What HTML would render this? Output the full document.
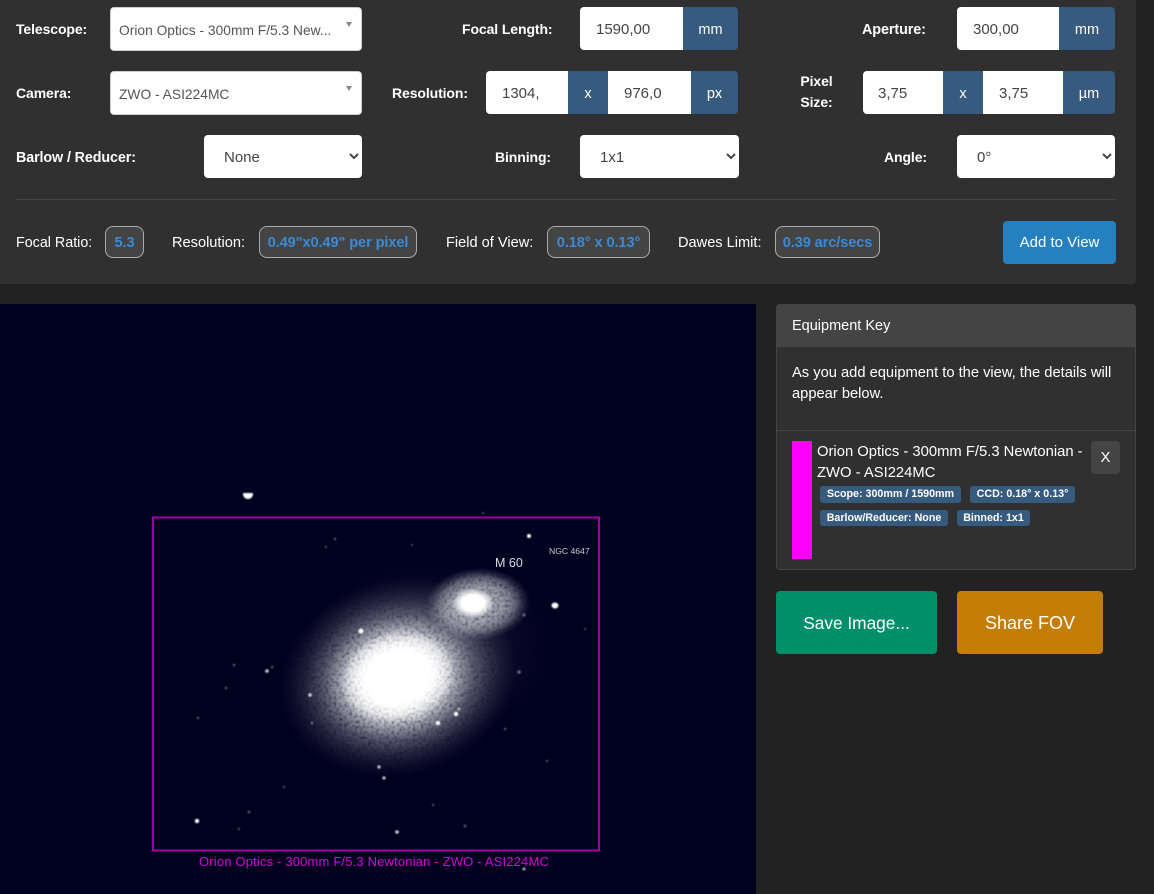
<!DOCTYPE html>
<html><head><meta charset="utf-8">
<style>
html,body{margin:0;padding:0;background:#222;width:1154px;height:894px;overflow:hidden}
body{position:relative;font-family:"Liberation Sans",sans-serif;color:#fff;font-size:14px}
.a{position:absolute;white-space:nowrap}
.lb{font-weight:bold;font-size:14px;letter-spacing:-.1px}
.t{font-size:14.6px}
.in{position:absolute;background:#fff;color:#444;font-size:15px;height:43px;line-height:45px;box-sizing:border-box;padding-left:16px;white-space:nowrap}
.ad{position:absolute;background:#375a7f;color:#fff;font-size:14.5px;height:43px;line-height:46px;text-align:center}
select{position:absolute;background:#fff;color:#444;border:0;border-radius:4px;font:15px "Liberation Sans",sans-serif;height:43px;padding:2px 0 0 16px;box-sizing:border-box}
.s2{position:absolute;background:#fff;border:1px solid #ccc;border-radius:4px;box-sizing:border-box;color:#555;font-size:13.8px;line-height:45px;padding-left:8px;left:110px;width:252px;height:44px;white-space:nowrap}
.s2:after{content:"";position:absolute;right:9px;top:14px;border:3.5px solid transparent;border-top:5px solid #888;border-bottom:0}
.bd{position:absolute;top:226px;height:32px;box-sizing:border-box;background:#444;border:1px solid #aaa;border-radius:8px;color:#3a8ad6;font-weight:bold;font-size:14.6px;line-height:33px;text-align:center;white-space:nowrap;letter-spacing:-.1px}
.tg{position:absolute;background:#375a7f;border-radius:3px;font-size:10.7px;font-weight:bold;line-height:17px;height:17px;text-align:center;white-space:nowrap}
.btn{position:absolute;border-radius:4px;text-align:center;white-space:nowrap}
</style></head><body>
<div class="a" style="left:0;top:0;width:1136px;height:284px;background:#303030;border-radius:0 0 4px 0"></div>

<div class="a lb" style="left:16px;top:21px">Telescope:</div>
<div class="s2" style="top:7px">Orion Optics - 300mm F/5.3 New...</div>
<div class="a lb" style="left:462px;top:21px">Focal Length:</div>
<div class="in" style="left:580px;top:7px;width:103px;border-radius:4px 0 0 4px">1590,00</div>
<div class="ad" style="left:683px;top:7px;width:55px;border-radius:0 4px 4px 0">mm</div>
<div class="a lb" style="left:862px;top:22px;font-size:14.4px">Aperture:</div>
<div class="in" style="left:957px;top:7px;width:102px;border-radius:4px 0 0 4px">300,00</div>
<div class="ad" style="left:1059px;top:7px;width:56px;border-radius:0 4px 4px 0">mm</div>

<div class="a lb" style="left:16px;top:85px">Camera:</div>
<div class="s2" style="top:71px">ZWO - ASI224MC</div>
<div class="a lb" style="left:392px;top:85px">Resolution:</div>
<div class="in" style="left:486px;top:71px;width:82px;border-radius:4px 0 0 4px">1304,</div>
<div class="ad" style="left:568px;top:71px;width:40px">x</div>
<div class="in" style="left:608px;top:71px;width:83px">976,0</div>
<div class="ad" style="left:691px;top:71px;width:47px;border-radius:0 4px 4px 0">px</div>
<div class="a lb" style="left:800px;top:71px;line-height:21px;text-align:center;width:33px">Pixel<br>Size:</div>
<div class="in" style="left:863px;top:71px;width:80px;border-radius:4px 0 0 4px;padding-left:15px">3,75</div>
<div class="ad" style="left:943px;top:71px;width:40px">x</div>
<div class="in" style="left:983px;top:71px;width:80px">3,75</div>
<div class="ad" style="left:1063px;top:71px;width:52px;border-radius:0 4px 4px 0">µm</div>

<div class="a lb" style="left:16px;top:150px;font-size:14.3px">Barlow / Reducer:</div>
<select style="left:204px;top:135px;width:158px"><option>None</option></select>
<div class="a lb" style="left:495px;top:149px">Binning:</div>
<select style="left:580px;top:135px;width:159px"><option>1x1</option></select>
<div class="a lb" style="left:884px;top:149px">Angle:</div>
<select style="left:957px;top:135px;width:158px"><option>0°</option></select>

<div class="a" style="left:16px;top:199px;width:1100px;height:1px;background:#444"></div>

<div class="a t" style="left:16px;top:235px;font-size:14.3px">Focal Ratio:</div>
<div class="bd" style="left:105px;width:39px">5.3</div>
<div class="a t" style="left:172px;top:235px">Resolution:</div>
<div class="bd" style="left:259px;width:158px">0.49"x0.49" per pixel</div>
<div class="a t" style="left:446px;top:235px">Field of View:</div>
<div class="bd" style="left:547px;width:103px">0.18° x 0.13°</div>
<div class="a t" style="left:678px;top:235px">Dawes Limit:</div>
<div class="bd" style="left:775px;width:105px">0.39 arc/secs</div>
<div class="btn" style="left:1003px;top:221px;width:113px;height:43px;background:#2580bf;line-height:44px;font-size:15px">Add to View</div>

<svg class="a" style="left:0;top:304px" width="756" height="590" viewBox="0 304 756 590">
<defs>
<radialGradient id="g1"><stop offset="0" stop-color="#fff"/><stop offset=".3" stop-color="#fff"/><stop offset=".42" stop-color="#fff" stop-opacity=".82"/><stop offset=".52" stop-color="#fff" stop-opacity=".58"/><stop offset=".64" stop-color="#fff" stop-opacity=".32"/><stop offset=".78" stop-color="#fff" stop-opacity=".14"/><stop offset=".9" stop-color="#fff" stop-opacity=".05"/><stop offset="1" stop-color="#fff" stop-opacity="0"/></radialGradient>
<radialGradient id="g2"><stop offset="0" stop-color="#fff" stop-opacity=".7"/><stop offset=".5" stop-color="#fff" stop-opacity=".6"/><stop offset=".72" stop-color="#fff" stop-opacity=".4"/><stop offset=".86" stop-color="#fff" stop-opacity=".16"/><stop offset="1" stop-color="#fff" stop-opacity="0"/></radialGradient>
<radialGradient id="g3"><stop offset="0" stop-color="#fff"/><stop offset=".55" stop-color="#fff"/><stop offset=".82" stop-color="#fff" stop-opacity=".45"/><stop offset="1" stop-color="#fff" stop-opacity="0"/></radialGradient>
<radialGradient id="g4"><stop offset="0" stop-color="#fff" stop-opacity=".1"/><stop offset="1" stop-color="#fff" stop-opacity="0"/></radialGradient>
<filter id="b1" x="-20%" y="-20%" width="140%" height="140%"><feGaussianBlur stdDeviation=".7"/></filter>
<filter id="n" x="-5%" y="-5%" width="110%" height="110%"><feTurbulence type="fractalNoise" baseFrequency=".38" numOctaves="1" seed="4" result="t"/><feColorMatrix in="t" type="matrix" values="0 0 0 0 1 0 0 0 0 1 0 0 0 0 1 .9 .9 0 0 0" result="m"/><feComposite in="SourceGraphic" in2="m" operator="in" result="c"/><feGaussianBlur in="c" stdDeviation=".6"/></filter>
</defs>
<rect x="0" y="304" width="756" height="590" fill="#00001f"/>
<ellipse cx="430" cy="650" rx="125" ry="90" fill="url(#g4)"/>
<g filter="url(#n)"><ellipse cx="398" cy="678" rx="120" ry="98" fill="url(#g1)" transform="rotate(-15 398 678)"/></g>
<ellipse cx="398" cy="677" rx="58" ry="46" fill="url(#g3)" transform="rotate(-15 398 677)"/>
<g filter="url(#n)"><ellipse cx="478" cy="604" rx="52" ry="36" fill="url(#g2)" transform="rotate(-3 478 604)"/></g>
<ellipse cx="473" cy="603" rx="21" ry="15" fill="url(#g3)"/>
<g fill="#fff" filter="url(#b1)">
<path d="M243 493h10c0 4-2 6-5 6s-5-2-5-6z"/>
<ellipse cx="555" cy="605.500" rx="3.500" ry="3"/>
<circle cx="529" cy="536" r="2"/>
<circle cx="361" cy="631" r="2.500"/>
<circle cx="197" cy="821" r="2.200"/>
<circle cx="438" cy="723" r="2.200"/>
<circle cx="456" cy="714" r="2.200"/>
<circle cx="267" cy="671" r="1.800" opacity=".8"/>
<circle cx="310" cy="695" r="1.800" opacity=".8"/>
<circle cx="397" cy="832" r="1.800" opacity=".8"/>
<circle cx="379" cy="767" r="1.600" opacity=".8"/>
<circle cx="384" cy="778" r="1.600" opacity=".8"/>
<circle cx="459" cy="709" r="1.300" opacity=".7"/>
<circle cx="524" cy="869" r="1.500" opacity=".7"/>
<g opacity=".4"><circle cx="249" cy="812" r="1.300"/><circle cx="465" cy="826" r="1.300"/><circle cx="226" cy="688" r="1.200"/><circle cx="198" cy="718" r="1.200"/><circle cx="234" cy="665" r="1.200"/><circle cx="335" cy="539" r="1.200"/><circle cx="326" cy="547" r="1"/><circle cx="524" cy="615" r="1.500"/><circle cx="519" cy="672" r="1.800"/><circle cx="272" cy="667" r="1.200"/><circle cx="312" cy="723" r="1.300"/><circle cx="505" cy="729" r="1.200"/><circle cx="547" cy="761" r="1.100"/><circle cx="433" cy="805" r="1.100"/><circle cx="239" cy="829" r="1.100"/><circle cx="284" cy="787" r="1.100"/><circle cx="412" cy="545" r="1"/><circle cx="483" cy="513" r="1"/><circle cx="585" cy="629" r="1"/></g>
</g>
<text x="495" y="567" fill="#ddd" font-size="12.500" font-family="Liberation Sans, sans-serif">M 60</text>
<text x="549" y="554" fill="#ccc" font-size="8.600" font-family="Liberation Sans, sans-serif">NGC 4647</text>
<rect x="153" y="517.500" width="446" height="333" fill="none" stroke="#a000a0" stroke-width="2"/>
<text x="199" y="866" fill="#d800d8" font-size="13" letter-spacing=".17" font-family="Liberation Sans, sans-serif">Orion Optics - 300mm F/5.3 Newtonian - ZWO - ASI224MC</text>
</svg>

<div class="a" style="left:776px;top:304px;width:360px;height:266px;box-sizing:border-box;background:#303030;border:1px solid #444;border-radius:4px"></div>
<div class="a" style="left:776px;top:304px;width:360px;height:43px;background:#444;border-radius:4px 4px 0 0"></div>
<div class="a" style="left:792px;top:318px;font-size:14.5px">Equipment Key</div>
<div class="a" style="left:792px;top:363px;line-height:21px;font-size:14.7px">As you add equipment to the view, the details will<br>appear below.</div>
<div class="a" style="left:777px;top:430px;width:358px;height:1px;background:#444"></div>
<div class="a" style="left:792px;top:441px;width:20px;height:118px;background:#f0f"></div>
<div class="a" style="left:817px;top:442px;line-height:21px;font-size:14.8px">Orion Optics - 300mm F/5.3 Newtonian -<br>ZWO - ASI224MC</div>
<div class="btn" style="left:1091px;top:441px;width:29px;height:33px;background:#444;line-height:33px;font-size:15px">X</div>
<div class="tg" style="left:820px;top:486px;width:141px">Scope: 300mm / 1590mm</div>
<div class="tg" style="left:970px;top:486px;width:105px">CCD: 0.18° x 0.13°</div>
<div class="tg" style="left:820px;top:510px;width:128px;height:16px;line-height:16px">Barlow/Reducer: None</div>
<div class="tg" style="left:957px;top:510px;width:73px;height:16px;line-height:16px">Binned: 1x1</div>

<div class="btn" style="left:776px;top:591px;width:161px;height:63px;background:#008f6a;line-height:64px;font-size:17.300px">Save Image...</div>
<div class="btn" style="left:957px;top:591px;width:146px;height:63px;background:#c47e08;line-height:64px;font-size:18px">Share FOV</div>
</body></html>
